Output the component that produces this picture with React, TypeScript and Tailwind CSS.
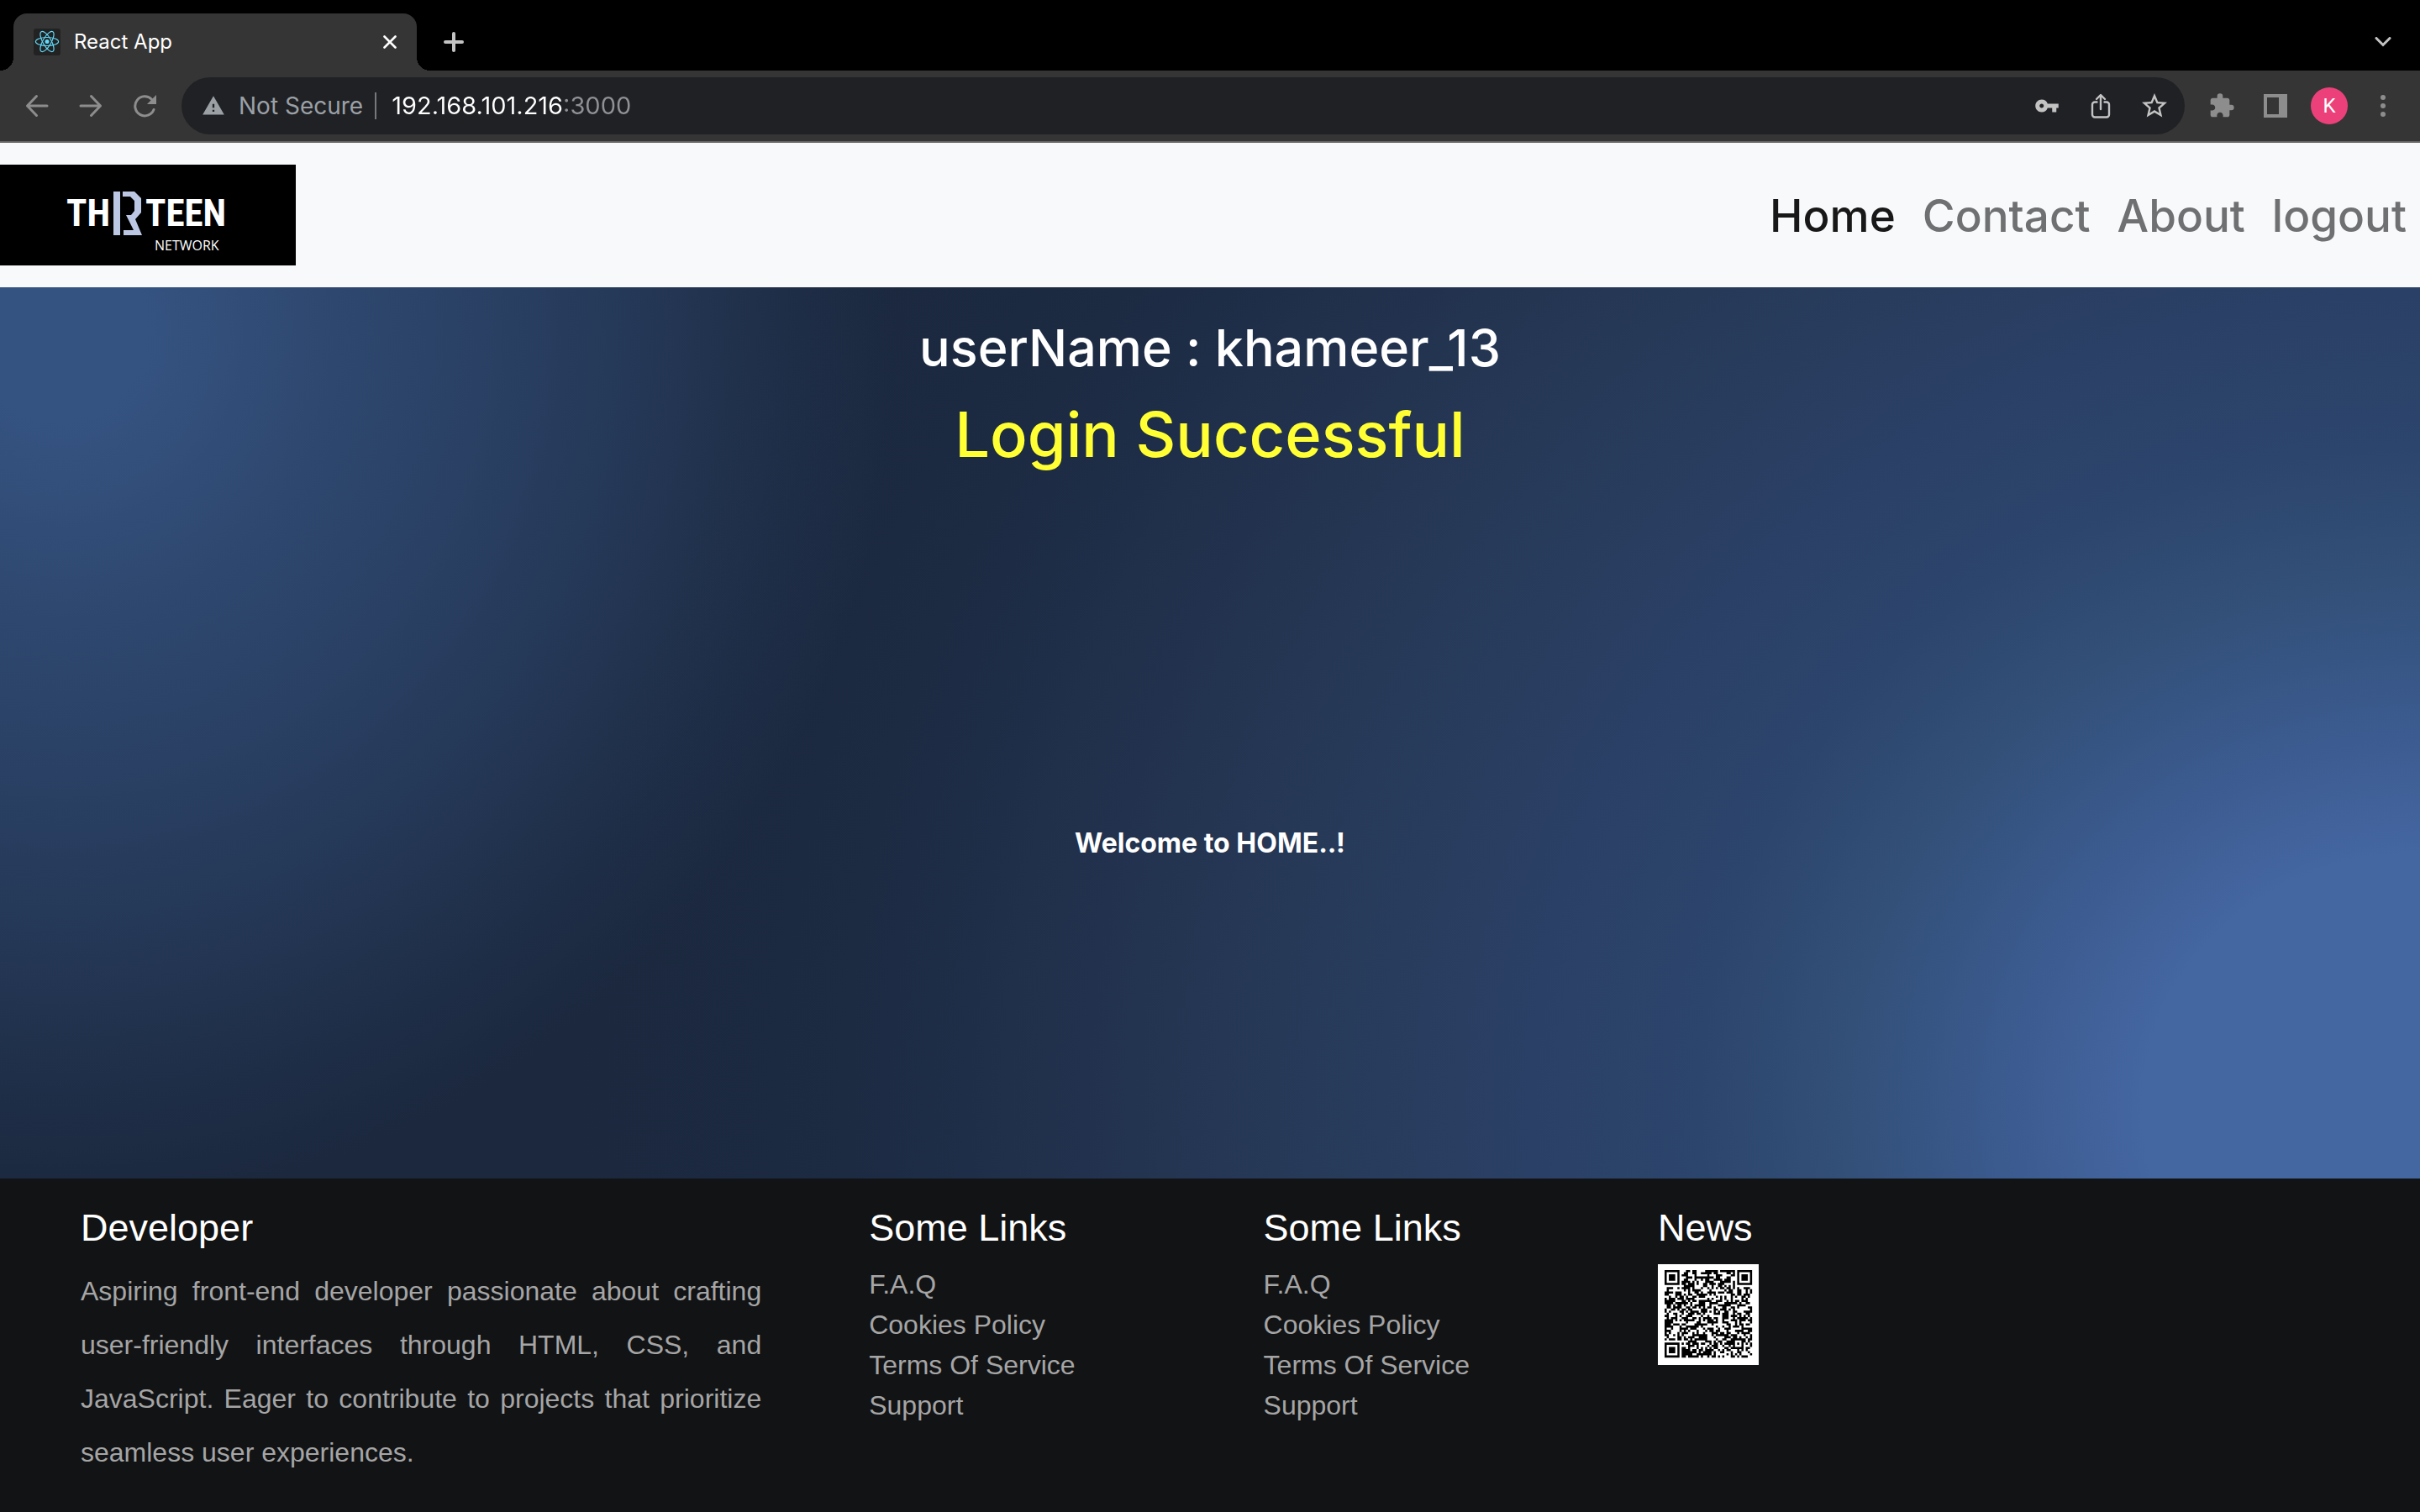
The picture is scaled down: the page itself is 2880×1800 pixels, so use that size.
import React from "react";
import { MdExtension, MdStarBorder, MdVpnKey, MdWarning } from "react-icons/md";

const QR_SIZE = 41;

function isFinder(x: number, y: number): boolean | null {
  const corners = [
    [0, 0],
    [QR_SIZE - 7, 0],
    [0, QR_SIZE - 7],
  ];
  for (const [cx, cy] of corners) {
    const dx = x - cx;
    const dy = y - cy;
    if (dx >= -1 && dx <= 7 && dy >= -1 && dy <= 7) {
      const ring = Math.max(Math.abs(dx - 3), Math.abs(dy - 3));
      return ring === 3 || ring <= 1;
    }
  }
  const ax = Math.abs(x - (QR_SIZE - 7));
  const ay = Math.abs(y - (QR_SIZE - 7));
  const ring = Math.max(ax, ay);
  if (ring <= 2) return ring !== 1;
  return null;
}

function buildQrPath(): string {
  let seed = 1313;
  let d = "";
  for (let y = 0; y < QR_SIZE; y++) {
    for (let x = 0; x < QR_SIZE; x++) {
      seed = (seed * 1103515245 + 12345) % 2147483648;
      const fixed = isFinder(x, y);
      const dark = fixed === null ? (seed >> 12) % 100 < 53 : fixed;
      if (dark) d += `M${x} ${y}h1v1h-1z`;
    }
  }
  return d;
}

const qrPath = buildQrPath();

function ReactMark() {
  return (
    <svg viewBox="0 0 32 32" className="size-8 shrink-0" aria-hidden="true">
      <rect width="32" height="32" rx="3" fill="#222" />
      <g fill="none" stroke="#61dafb" strokeWidth="1.2">
        <ellipse cx="16" cy="15.500" rx="13.6" ry="5" />
        <ellipse cx="16" cy="15.500" rx="13.6" ry="5" transform="rotate(60 16 15.500)" />
        <ellipse cx="16" cy="15.500" rx="13.6" ry="5" transform="rotate(120 16 15.500)" />
      </g>
      <circle cx="16" cy="15.500" r="2.5" fill="#61dafb" />
    </svg>
  );
}

function ToolButton({ label, children }: { label: string; children: React.ReactNode }) {
  return (
    <button type="button" aria-label={label} className="flex h-16 w-16 shrink-0 items-center justify-center">
      {children}
    </button>
  );
}

function TabStrip() {
  return (
    <div className="flex h-[84px] items-end bg-black pl-4 pr-3">
      <div className="relative flex h-[68px] w-[480px] items-center rounded-t-2xl bg-[#353535] px-6">
        <span className="absolute bottom-0 -left-4 size-4 bg-[radial-gradient(circle_at_0_0,transparent_16px,#353535_16px)]" />
        <span className="absolute bottom-0 -right-4 size-4 bg-[radial-gradient(circle_at_100%_0,transparent_16px,#353535_16px)]" />
        <ReactMark />
        <span className="ml-4 flex-1 text-2xl text-white">React App</span>
        <button type="button" aria-label="Close tab">
          <svg viewBox="0 0 16 16" className="size-4" fill="none" stroke="#fff" strokeWidth="2.6" strokeLinecap="round">
            <path d="M1.5 1.5l13 13M14.5 1.5l-13 13" />
          </svg>
        </button>
      </div>
      <button type="button" aria-label="New tab" className="flex h-[68px] items-center pl-8">
        <svg viewBox="0 0 24 24" className="size-6" fill="none" stroke="#c3c3c3" strokeWidth="4" strokeLinecap="round">
          <path d="M12 2v20M2 12h20" />
        </svg>
      </button>
      <button type="button" aria-label="Search tabs" className="ml-auto flex h-[68px] w-16 items-center justify-center">
        <svg viewBox="0 0 20 12" className="h-3 w-5" fill="none" stroke="#c3c3c3" strokeWidth="3" strokeLinecap="round">
          <path d="M2 1.5l8 8 8-8" />
        </svg>
      </button>
    </div>
  );
}

function Toolbar() {
  return (
    <div className="flex h-[86px] items-center border-b-2 border-[#676464] bg-[#353535] px-3 text-[#8d8d8d]">
      <ToolButton label="Back">
        <svg viewBox="0 0 28 28" className="size-7" fill="none" stroke="currentColor" strokeWidth="3" strokeLinecap="round" strokeLinejoin="round">
          <path d="M26 14H2.5M13.5 2.5L2.5 14l11 11.5" />
        </svg>
      </ToolButton>
      <ToolButton label="Forward">
        <svg viewBox="0 0 28 28" className="size-7" fill="none" stroke="currentColor" strokeWidth="3" strokeLinecap="round" strokeLinejoin="round">
          <path d="M2 14h23.5M14.5 2.5l11 11.5-11 11.5" />
        </svg>
      </ToolButton>
      <ToolButton label="Reload">
        <svg viewBox="0 0 28 28" className="size-7" fill="none" stroke="currentColor" strokeWidth="3" strokeLinecap="round">
          <path d="M25 18.5A11.5 11.5 0 1 1 22.5 6.3" />
          <path d="M28 1v11H17z" fill="currentColor" stroke="none" />
        </svg>
      </ToolButton>
      <div className="ml-3 mr-3 flex h-[68px] flex-1 items-center rounded-full bg-[#202125] pl-6 pr-1 text-[#c3c3c3]">
        <MdWarning className="size-7 text-[#9ba0a5]" />
        <span className="ml-4 text-[28px] text-[#9ba0a5]">Not Secure</span>
        <span className="ml-3.5 mr-[18px] h-8 w-0.5 bg-[#75787c]" />
        <input
          aria-label="Address"
          defaultValue="192.168.101.216:3000"
          className="min-w-0 flex-1 bg-[linear-gradient(to_right,#fff_206px,#8e9195_206px)] bg-clip-text text-[29px] text-transparent outline-none"
        />
        <ToolButton label="Saved passwords">
          <MdVpnKey className="size-[30px]" />
        </ToolButton>
        <ToolButton label="Share">
          <svg viewBox="0 0 24 30" className="h-[30px] w-6" fill="none" stroke="currentColor" strokeWidth="2.4" strokeLinecap="round" strokeLinejoin="round">
            <path d="M7.5 10.5H5a3 3 0 0 0-3 3v12a3 3 0 0 0 3 3h14a3 3 0 0 0 3-3v-12a3 3 0 0 0-3-3h-2.500M12 19V2.500M7 7l5-5 5 5" />
          </svg>
        </ToolButton>
        <ToolButton label="Bookmark this page">
          <MdStarBorder className="size-9" />
        </ToolButton>
      </div>
      <ToolButton label="Extensions">
        <MdExtension className="size-8" />
      </ToolButton>
      <ToolButton label="Side panel">
        <svg viewBox="0 0 28 28" className="size-7" fill="currentColor">
          <path fillRule="evenodd" d="M0 0h28v28H0zM4 4v20h14V4z" />
        </svg>
      </ToolButton>
      <ToolButton label="Profile">
        <span className="flex size-11 items-center justify-center rounded-full bg-[#ec407a] font-['Roboto',sans-serif] text-2xl text-white">K</span>
      </ToolButton>
      <ToolButton label="Menu">
        <svg viewBox="0 0 6 26" className="h-[26px] w-1.5" fill="currentColor">
          <circle cx="3" cy="3" r="3" />
          <circle cx="3" cy="13" r="3" />
          <circle cx="3" cy="23" r="3" />
        </svg>
      </ToolButton>
    </div>
  );
}

function Brand() {
  return (
    <a href="#home" aria-label="Thirteen Network" className="flex h-[120px] w-[352px] flex-col bg-black pl-[79px] pt-8 text-white">
      <span className="flex h-[52px] items-center gap-1 font-['Noto_Sans_ExtraCondensed','Roboto_Condensed','Open_Sans_Condensed','Liberation_Sans',sans-serif] text-[45px] leading-[52px] font-bold">
        <span>TH</span>
        <svg viewBox="0 0 34 52" className="h-[52px] w-[34px]" fill="#bcc8e3" aria-hidden="true">
          <path d="M0 0h8v52H0z" />
          <path d="M11 0h14l8 8v17l-7 8 8 19H12v-6h12l-9-18h6l4-5V11l-5-5h-9z" />
        </svg>
        <span>TEEN</span>
      </span>
      <span className="ml-[105px] mt-0.5 font-['Open_Sans',sans-serif] text-base leading-5">NETWORK</span>
    </a>
  );
}

const navItems = ["Home", "Contact", "About", "logout"];

function SiteNav() {
  return (
    <header className="flex h-[172px] items-center justify-between bg-[#f8f9fb]">
      <Brand />
      <nav className="flex">
        {navItems.map((item, i) => (
          <a
            key={item}
            href={`#${item.toLowerCase()}`}
            className={i === 0 ? "px-4 pt-0.5 text-[53px] leading-[84px] font-medium text-[#181818]" : "px-4 pt-0.5 text-[53px] leading-[84px] font-medium text-[#6f7071]"}
          >
            {item}
          </a>
        ))}
      </nav>
    </header>
  );
}

function Hero() {
  return (
    <main className="flex flex-1 flex-col items-center bg-[radial-gradient(34.5%_98.6%_at_2.5%_5%,rgba(53,83,129,1)_10%,rgba(53,83,129,0.72)_33%,rgba(53,83,129,0.58)_50%,rgba(53,83,129,0.35)_70%,rgba(53,83,129,0.12)_88%,rgba(53,83,129,0)_100%),radial-gradient(76.5%_190%_at_100%_92%,#4466a1_15%,#3c5b90_22%,#335079_31%,#2c456c_39%,#2b4066_48%,#263957_62%,#22324e_72%,#1c2a42_85%,#1b283e_100%)] pt-[34px]">
      <h2 className="text-[61px] leading-[77px] font-medium text-white">userName : khameer_13</h2>
      <h1 className="mt-4 text-[74px] leading-[96px] font-medium text-[#ffff33]">Login Successful</h1>
      <div className="flex flex-1 items-center pt-10">
        <p className="text-[32px] leading-[48px] font-bold text-white">Welcome to HOME..!</p>
      </div>
    </main>
  );
}

const links = ["F.A.Q", "Cookies Policy", "Terms Of Service", "Support"];

function FooterHeading({ children }: { children: string }) {
  return <h3 className="mb-4 text-[45px] leading-[54px] text-white">{children}</h3>;
}

function LinkColumn() {
  return (
    <section className="w-[16.86%]">
      <FooterHeading>Some Links</FooterHeading>
      <ul>
        {links.map((link) => (
          <li key={link}>
            <a href="#links" className="text-[32px] leading-[48px]">{link}</a>
          </li>
        ))}
      </ul>
    </section>
  );
}

function Footer() {
  return (
    <footer className="flex bg-[#121315] pt-8 pb-[39px] pl-24 font-['Liberation_Sans',sans-serif] text-[#a5a5a5]">
      <section className="w-[33.7%] pr-32">
        <FooterHeading>Developer</FooterHeading>
        <p className="text-justify text-[32px] leading-[64px]">
          Aspiring front-end developer passionate about crafting user-friendly interfaces through HTML, CSS, and
          JavaScript. Eager to contribute to projects that prioritize seamless user experiences.
        </p>
      </section>
      <LinkColumn />
      <LinkColumn />
      <section>
        <FooterHeading>News</FooterHeading>
        <svg viewBox="0 0 120 120" className="size-[120px]" role="img" aria-label="QR code">
          <rect width="120" height="120" fill="#fff" />
          <g transform="translate(8 7) scale(2.54)">
            <path d={qrPath} fill="#000" />
          </g>
        </svg>
      </section>
    </footer>
  );
}

export default function App() {
  return (
    <div className="flex min-h-screen flex-col font-['Inter',sans-serif]">
      <TabStrip />
      <Toolbar />
      <SiteNav />
      <Hero />
      <Footer />
    </div>
  );
}
